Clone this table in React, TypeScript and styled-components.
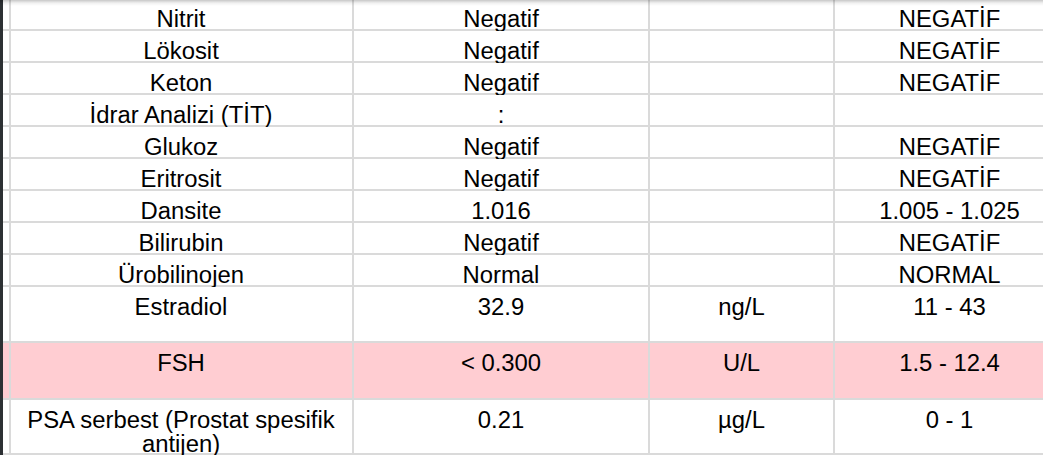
import React from "react";
import styled, { createGlobalStyle } from "styled-components";

const GlobalStyle = createGlobalStyle`
  html, body {
    margin: 0;
    padding: 0;
    background: #ffffff;
    overflow: hidden;
  }
  body {
    font-family: "Liberation Sans", Arial, sans-serif;
  }
`;

const Page = styled.div`
  position: relative;
  display: flex;
  width: 1043px;
  height: 455px;
  overflow: hidden;
  background: #ffffff;
`;

const DarkEdge = styled.div`
  flex: 0 0 3px;
  background: #2c3033;
`;

const Viewport = styled.div`
  flex: 1 1 auto;
  overflow: hidden;
`;

const Sheet = styled.div`
  display: flex;
  flex-direction: column;
  margin-top: -1.5px;
`;

const Row = styled.div<{ $h: number; $tint?: boolean }>`
  display: grid;
  grid-template-columns: 7px 344px 296px 185px 231px;
  height: ${(p) => p.$h}px;
  box-sizing: border-box;
  border-bottom: 2px solid #dadada;
  background: ${(p) => (p.$tint ? "#ffcdd2" : "#ffffff")};
`;

const Cell = styled.div`
  box-sizing: border-box;
  border-right: 2px solid #dadada;
  padding: 8.5px 3px 0;
  text-align: center;
  font-size: 23.85px;
  line-height: 24px;
  color: #000000;
  white-space: normal;
  overflow: visible;
`;

const TopShadow = styled.div`
  position: absolute;
  left: 0;
  right: 0;
  top: 0;
  height: 6px;
  background: linear-gradient(
    to bottom,
    rgba(0, 0, 0, 0.22),
    rgba(0, 0, 0, 0.06) 50%,
    rgba(0, 0, 0, 0)
  );
  pointer-events: none;
`;

type Item = {
  name: string;
  value: string;
  unit: string;
  range: string;
  h: number;
  tint?: boolean;
};

const rows: Item[] = [
  { name: "Nitrit", value: "Negatif", unit: "", range: "NEGATİF", h: 32 },
  { name: "Lökosit", value: "Negatif", unit: "", range: "NEGATİF", h: 32 },
  { name: "Keton", value: "Negatif", unit: "", range: "NEGATİF", h: 32 },
  { name: "İdrar Analizi (TİT)", value: ":", unit: "", range: "", h: 32 },
  { name: "Glukoz", value: "Negatif", unit: "", range: "NEGATİF", h: 32 },
  { name: "Eritrosit", value: "Negatif", unit: "", range: "NEGATİF", h: 32 },
  { name: "Dansite", value: "1.016", unit: "", range: "1.005 - 1.025", h: 32 },
  { name: "Bilirubin", value: "Negatif", unit: "", range: "NEGATİF", h: 32 },
  { name: "Ürobilinojen", value: "Normal", unit: "", range: "NORMAL", h: 32 },
  { name: "Estradiol", value: "32.9", unit: "ng/L", range: "11 - 43", h: 56 },
  { name: "FSH", value: "< 0.300", unit: "U/L", range: "1.5 - 12.4", h: 57, tint: true },
  {
    name: "PSA serbest (Prostat spesifik antijen)",
    value: "0.21",
    unit: "µg/L",
    range: "0 - 1",
    h: 55,
  },
];

export default function App() {
  return (
    <>
      <GlobalStyle />
      <Page>
        <DarkEdge />
        <Viewport>
          <Sheet>
            {rows.map((r, i) => (
              <Row key={i} $h={r.h} $tint={r.tint}>
                <Cell />
                <Cell>{r.name}</Cell>
                <Cell>{r.value}</Cell>
                <Cell>{r.unit}</Cell>
                <Cell>{r.range}</Cell>
              </Row>
            ))}
          </Sheet>
        </Viewport>
        <TopShadow />
      </Page>
    </>
  );
}
